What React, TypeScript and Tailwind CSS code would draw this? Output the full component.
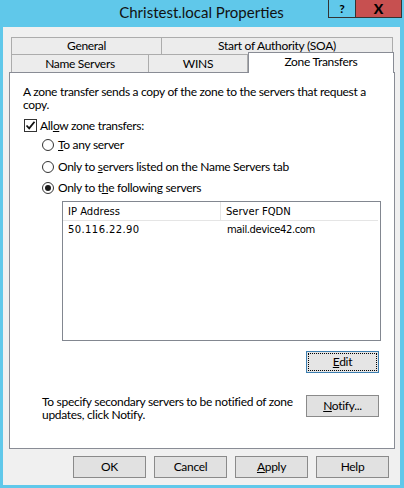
import React from "react";

const ui = { fontFamily: 'Lato, "Noto Sans", sans-serif' };
const lv = { fontFamily: '"DejaVu Sans", sans-serif' };

function Btn({ children, w = "w-[73px]" }: { children: React.ReactNode; w?: string }) {
  return (
    <div
      className={`${w} h-[22px] flex items-center justify-center bg-[#e1e1e1] border border-[#8a8a8a] text-[12px] text-black`}
    >
      {children}
    </div>
  );
}

function Radio({ checked, children }: { checked?: boolean; children: React.ReactNode }) {
  return (
    <div className="flex items-center h-[13px] gap-[4px]">
      <div className="w-[12px] h-[12px] rounded-full border border-[#333] bg-white flex items-center justify-center">
        {checked && <div className="w-[6px] h-[6px] rounded-full bg-[#1a1a1a]" />}
      </div>
      <span className="leading-[13px] whitespace-nowrap">{children}</span>
    </div>
  );
}

export default function App() {
  return (
    <div className="w-[404px] h-[488px] bg-[#60c8ea] flex flex-col pl-[3px] pr-[4px] pb-[3px]" style={ui}>
      {/* Title bar */}
      <div className="h-[27px] relative flex items-start justify-center pt-[1px]">
        <span className="text-[15px] leading-[22px] text-[#111]">Christest.local Properties</span>
        <div className="absolute top-0 right-[-2px] flex">
          <div className="w-[28px] h-[18px] border border-t-0 border-[#333] flex items-center justify-center text-[12px] font-bold text-black leading-none">
            ?
          </div>
          <div className="w-[46px] h-[18px] bg-[#c75050] border border-t-0 border-l-0 border-[#333] flex items-center justify-center text-[14px] font-black text-black leading-none">
            X
          </div>
        </div>
      </div>

      {/* Client area */}
      <div className="flex-1 bg-[#f0f0f0] flex flex-col pt-[10px] pl-[6px] pr-[5px] text-[12px] text-black tracking-[-0.3px]">
        {/* Tabs */}
        <div className="flex flex-col px-[2px]">
          <div className="flex h-[17px]">
            <div className="w-[151px] border border-b-0 border-[#acacac] bg-[#ececec] flex items-center justify-center leading-none">
              General
            </div>
            <div className="flex-1 border border-b-0 border-l-0 border-[#acacac] bg-[#ececec] flex items-center justify-center leading-none">
              Start of Authority (SOA)
            </div>
          </div>
          <div className="flex h-[18px] mr-[-1px]">
            <div className="w-[138px] border border-b-0 border-[#acacac] bg-[#ececec] flex items-center justify-center leading-none">
              Name Servers
            </div>
            <div className="w-[99px] border border-b-0 border-l-0 border-[#acacac] bg-[#ececec] flex items-center justify-center leading-none">
              WINS
            </div>
            <div className="flex-1 relative z-10 mt-[-2px] h-[21px] border border-b-0 border-[#898c95] bg-white flex items-start justify-center pt-[3px] leading-none">
              Zone Transfers
            </div>
          </div>
        </div>

        {/* Panel */}
        <div className="h-[377px] border border-[#898c95] bg-white flex flex-col">
          <p className="mt-[12px] ml-[13px] leading-[13px] whitespace-nowrap">
            A zone transfer sends a copy of the zone to the servers that request a
            <br />
            copy.
          </p>
          <div className="mt-[8px] ml-[14px] flex items-center h-[13px] gap-[3px]">
            <div className="w-[13px] h-[13px] border border-[#333] bg-white flex items-center justify-center">
              <svg width="11" height="11" viewBox="0 0 11 11">
                <path d="M1.5 5.5 L4.2 8.3 L9.5 1.8" fill="none" stroke="#111" strokeWidth="1.8" />
              </svg>
            </div>
            <span className="leading-[13px] whitespace-nowrap">
              All<span className="underline">o</span>w zone transfers:
            </span>
          </div>
          <div className="ml-[32px] flex flex-col">
            <div className="mt-[6px]">
              <Radio>
                <span className="underline">T</span>o any server
              </Radio>
            </div>
            <div className="mt-[9px]">
              <Radio>
                Only to <span className="underline">s</span>ervers listed on the Name Servers tab
              </Radio>
            </div>
            <div className="mt-[8px]">
              <Radio checked>
                Only to t<span className="underline">h</span>e following servers
              </Radio>
            </div>
          </div>

          {/* List view */}
          <div className="mt-[7px] ml-[52px] w-[319px] h-[140px] border border-[#828790] bg-white flex flex-col text-[10px] text-black tracking-normal" style={lv}>
            <div className="flex h-[19px] border-b border-[#e5e5e5] mr-[2px]">
              <div className="w-[158px] border-r border-[#e5e5e5] flex items-center pl-[5px]">IP Address</div>
              <div className="flex-1 flex items-center pl-[5px]">Server FQDN</div>
            </div>
            <div className="flex h-[17px] items-center">
              <div className="w-[159px] pl-[5px] tracking-[0.4px]">50.116.22.90</div>
              <div className="flex-1 pl-[5px] tracking-[-0.4px]">mail.device42.com</div>
            </div>
          </div>

          {/* Edit */}
          <div className="mt-[10px] mr-[15px] flex justify-end">
            <div className="w-[73px] h-[22px] bg-[#e5e5e5] border border-[#3c7fb1] p-[1px]">
              <div className="w-full h-full border border-dotted border-black flex items-center justify-center">
                <span>
                  <span className="underline">E</span>dit
                </span>
              </div>
            </div>
          </div>

          {/* Notify */}
          <div className="mt-[22px] ml-[32px] mr-[15px] flex justify-between items-start">
            <p className="leading-[13px] whitespace-nowrap">
              To specify secondary servers to be notified of zone
              <br />
              updates, click Notify.
            </p>
            <Btn>
              <span>
                <span className="underline">N</span>otify...
              </span>
            </Btn>
          </div>
        </div>

        {/* Bottom buttons */}
        <div className="mt-[7px] flex justify-end gap-[8px] pr-[6px]">
          <Btn>OK</Btn>
          <Btn>Cancel</Btn>
          <Btn>
            <span>
              <span className="underline">A</span>pply
            </span>
          </Btn>
          <Btn>Help</Btn>
        </div>
      </div>
    </div>
  );
}
